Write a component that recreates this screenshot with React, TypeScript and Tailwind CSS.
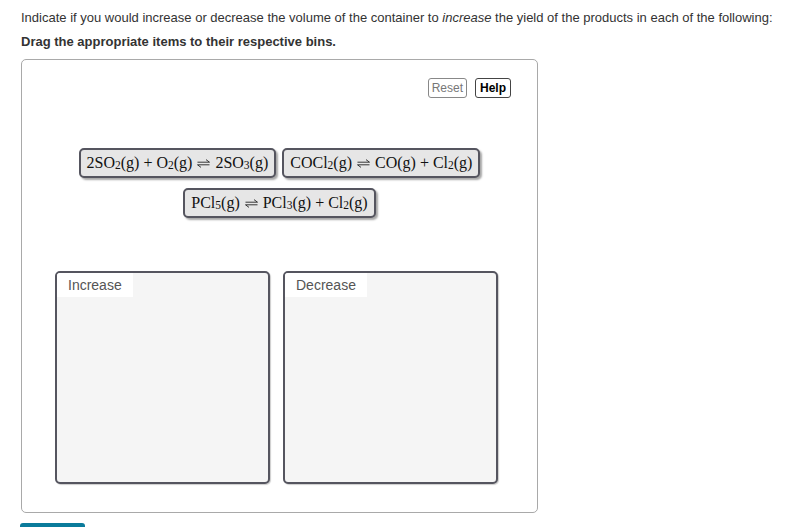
import React from "react";

const Arrow = () => (
  <svg width="13" height="9" viewBox="0 0 13 9" className="mx-[5px] inline-block relative top-[0px]" fill="none" stroke="#222" strokeWidth="0.9">
    <path d="M0.5 3.2 H12.5 M12.5 3.2 L9 0.6" />
    <path d="M12.5 5.8 H0.5 M0.5 5.8 L4 8.4" />
  </svg>
);

const Sub = ({ children }: { children: React.ReactNode }) => (
  <span className="text-[11.5px] relative top-[3px] leading-none">{children}</span>
);

const Chip = ({ children }: { children: React.ReactNode }) => (
  <div className="h-[30px] flex items-center px-[6px] bg-[#e6e6e6] border-2 border-[#55555f] rounded-[5px] shadow-[2px_2px_2px_rgba(0,0,0,0.35)] text-[16px] text-[#111] whitespace-nowrap [font-family:'Liberation_Serif','DejaVu_Serif',serif]">
    {children}
  </div>
);

const Bin = ({ label }: { label: string }) => (
  <div className="w-[215px] h-[213px] bg-[#f5f5f5] border-2 border-[#55555f] rounded-[5px] shadow-[1px_1px_1px_rgba(0,0,0,0.2)]">
    <div className="inline-block bg-white px-[11px] h-[24px] leading-[24px] text-[14px] text-[#555] rounded-tl-[3px]">
      {label}
    </div>
  </div>
);

export default function App() {
  return (
    <div className="w-[804px] h-[527px] overflow-hidden bg-white relative [font-family:'Liberation_Sans',Arial,sans-serif]">
      <div className="pl-[21px]">
        <p className="pt-[10px] text-[13px] leading-[16px] text-[#333]">
          Indicate if you would increase or decrease the volume of the container to <i>increase</i> the yield of the products in each of the following:
        </p>
        <p className="mt-[8px] text-[13px] leading-[16px] font-bold text-[#333]">
          Drag the appropriate items to their respective bins.
        </p>
        <div className="mt-[9px] w-[517px] h-[454px] border border-[#a9a9a9] rounded-[5px] pt-[18px]">
          <div className="flex justify-end gap-[8px] pr-[26px]">
            <button className="h-[20px] px-[3px] border border-[#888] rounded-[3px] text-[12px] text-[#777] bg-white leading-none">
              Reset
            </button>
            <button className="h-[20px] px-[4px] border border-[#444] rounded-[3px] text-[12px] font-bold text-black bg-white leading-none">
              Help
            </button>
          </div>
          <div className="mt-[50px] flex flex-wrap justify-center gap-x-[6px] gap-y-[10px] px-[40px]">
            <Chip>
              2SO<Sub>2</Sub>(g) + O<Sub>2</Sub>(g)<Arrow />2SO<Sub>3</Sub>(g)
            </Chip>
            <Chip>
              COCl<Sub>2</Sub>(g)<Arrow />CO(g) + Cl<Sub>2</Sub>(g)
            </Chip>
            <Chip>
              PCl<Sub>5</Sub>(g)<Arrow />PCl<Sub>3</Sub>(g) + Cl<Sub>2</Sub>(g)
            </Chip>
          </div>
          <div className="mt-[53px] flex gap-[13px] pl-[33px]">
            <Bin label="Increase" />
            <Bin label="Decrease" />
          </div>
        </div>
        <div className="mt-[10px] w-[65px] h-[10px] bg-[#0a7b9b] rounded-t-[3px] -ml-[1px]" />
      </div>
    </div>
  );
}
